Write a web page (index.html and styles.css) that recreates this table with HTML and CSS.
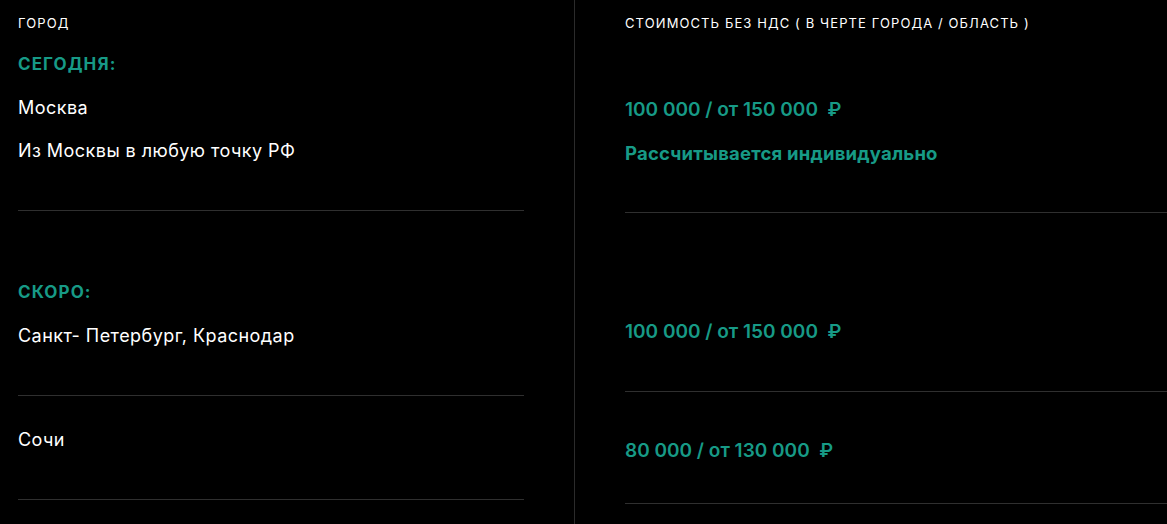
FILE: index.html
```html
<!DOCTYPE html>
<html lang="ru">
<head>
    <meta charset="UTF-8">
    <meta name="viewport" content="width=device-width, initial-scale=1.0">
    <title>Стоимость доставки</title>
    <link rel="stylesheet" href="styles.css">
</head>
<body>
    <div class="tabla">
        <div class="col col-ciudad">
            <div class="cabeza">ГОРОД</div>

            <div class="bloque b1">
                <p class="etiqueta">СЕГОДНЯ:</p>
                <p class="ciudad">Москва</p>
                <p class="ciudad">Из Москвы в любую точку РФ</p>
            </div>

            <div class="bloque b2">
                <p class="etiqueta">СКОРО:</p>
                <p class="ciudad">Санкт- Петербург, Краснодар</p>
            </div>

            <div class="bloque b3">
                <p class="ciudad">Сочи</p>
            </div>
        </div>

        <div class="col col-precio">
            <div class="cabeza">СТОИМОСТЬ БЕЗ НДС ( В ЧЕРТЕ ГОРОДА / ОБЛАСТЬ )</div>

            <div class="bloque p1">
                <p class="precio">100 000 / от 150 000 &nbsp;₽</p>
                <p class="nota">Рассчитывается индивидуально</p>
            </div>

            <div class="bloque p2">
                <p class="precio">100 000 / от 150 000 &nbsp;₽</p>
            </div>

            <div class="bloque p3">
                <p class="precio">80 000 / от 130 000 &nbsp;₽</p>
            </div>
        </div>
    </div>
</body>
</html>
```

FILE: styles.css
```css
body {
    margin: 0;
    background-color: #000;
    color: #fff;
    font-family: Inter, Roboto, sans-serif;
    overflow: hidden;
}

.tabla {
    display: flex;
    height: 524px;
}

.col {
    display: flex;
    flex-direction: column;
}

.col-ciudad {
    width: 506px;
    padding-left: 18px;
    padding-right: 50px;
    border-right: 1px solid #2b2b2b;
}

.col-precio {
    flex: 1;
    padding-left: 50px;
}

.cabeza {
    font-size: 13px;
    line-height: 16px;
    letter-spacing: 1.1px;
    padding-top: 15px;
    height: 26px;
}

.bloque {
    border-bottom: 1px solid #2f2f2f;
    display: flex;
    flex-direction: column;
    box-sizing: border-box;
}

.bloque p {
    margin: 0;
}

/* columna de ciudades */
.etiqueta {
    color: #179a86;
    font-weight: 700;
    font-size: 17px;
    line-height: 20px;
    letter-spacing: 1.1px;
    margin-bottom: 23px !important;
}

.ciudad {
    font-size: 18px;
    line-height: 20px;
    letter-spacing: 0.45px;
    margin-bottom: 23px !important;
}

.ciudad:last-child {
    margin-bottom: 0 !important;
}

.b1 {
    padding-top: 13px;
    height: 170px;
}

.b1 .etiqueta {
    margin-bottom: 24px !important;
}

.b2 {
    padding-top: 71px;
    height: 185px;
}

.b2 .etiqueta {
    margin-bottom: 24px !important;
}

.b3 {
    padding-top: 34px;
    height: 104px;
}

/* columna de precios */
.precio {
    color: #179a86;
    font-weight: 600;
    font-size: 19px;
    line-height: 20px;
}

.nota {
    color: #179a86;
    font-weight: 700;
    font-size: 18.5px;
    line-height: 20px;
    letter-spacing: 0.2px;
    margin-top: 23px !important;
}

.p1 {
    padding-top: 59px;
    height: 172px;
}

.p2 {
    padding-top: 109px;
    height: 179px;
}

.p3 {
    padding-top: 49px;
    height: 112px;
}
```
